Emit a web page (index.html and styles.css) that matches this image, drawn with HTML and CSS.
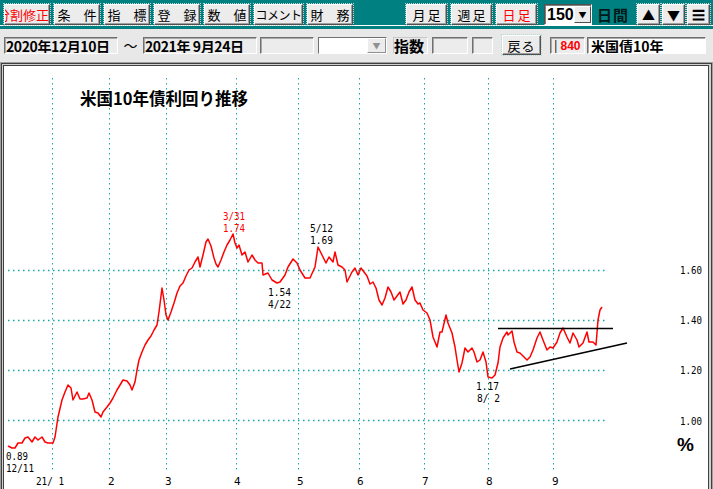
FILE: index.html
```html
<!DOCTYPE html>
<html lang="ja">
<head>
<meta charset="utf-8">
<title>米国10年債利回り推移</title>
<link rel="stylesheet" href="styles.css">
</head>
<body>
<div class="app">
  <div class="toolbar">
    <div class="btn w46 red clip ml4">分割修正</div>
    <div class="btn w46 ml4">条　件</div>
    <div class="btn w46 ml4">指　標</div>
    <div class="btn w46 ml4">登　録</div>
    <div class="btn w46 ml4">数　値</div>
    <div class="btn w49 ml4 tight">コメント</div>
    <div class="btn w46 ml4">財　務</div>
    <div class="btn w41 ml53 sp">月足</div>
    <div class="btn w41 ml4 sp">週足</div>
    <div class="btn w41 ml4 sp red">日足</div>
    <div class="select ml7">
      <span class="select-val">150</span>
      <span class="select-drop">▼</span>
    </div>
    <div class="tb-label">日間</div>
    <div class="btn w23 ml8 icon">▲</div>
    <div class="btn w23 ml2 icon">▼</div>
    <div class="btn w23 ml2 icon">☰</div>
  </div>
  <div class="toolbar-strip"></div>

  <div class="infobar">
    <div class="field date ml4">2020年12月10日</div>
    <div class="tilde">～</div>
    <div class="field date">2021年 9月24日</div>
    <div class="field w54 ml3"></div>
    <div class="combo ml4"><span class="combo-drop">▼</span></div>
    <div class="label-box ml6">指数</div>
    <div class="field w36 ml4"></div>
    <div class="field w21 ml4"></div>
    <div class="btn back ml9">戻る</div>
    <div class="field code ml9"><span class="bar">|</span><span class="num">840</span></div>
    <div class="field name ml2">米国債10年</div>
  </div>

  <div class="chart">
    <div class="chart-frame">
      <div class="chart-inner">
        <svg class="plot" width="704" height="423" viewBox="4 66 704 423" xmlns="http://www.w3.org/2000/svg">
          <g class="grid-v">
            <line x1="52.5" y1="78" x2="52.5" y2="471"/>
            <line x1="109.5" y1="78" x2="109.5" y2="471"/>
            <line x1="166.5" y1="78" x2="166.5" y2="471"/>
            <line x1="236.5" y1="78" x2="236.5" y2="471"/>
            <line x1="298.5" y1="78" x2="298.5" y2="471"/>
            <line x1="359.5" y1="78" x2="359.5" y2="471"/>
            <line x1="424.5" y1="78" x2="424.5" y2="471"/>
            <line x1="488.5" y1="78" x2="488.5" y2="471"/>
            <line x1="553.5" y1="78" x2="553.5" y2="471"/>
          </g>
          <g class="grid-h">
            <line x1="8" y1="270.5" x2="606" y2="270.5"/>
            <line x1="8" y1="320.5" x2="606" y2="320.5"/>
            <line x1="8" y1="370.5" x2="606" y2="370.5"/>
            <line x1="8" y1="420.5" x2="606" y2="420.5"/>
          </g>

          <text class="title" x="80" y="105">米国10年債利回り推移</text>

          <polyline class="series" points="8,446 12,448 15,448 18,443 22,443 25,438 28,437 32,442 35,437 38,440 42,437 45,442 48,443 53,443 55,437 58,417 62,400 65,392 68,385 71,388 73,400 77,392 80,399 83,399 87,398 89,393 92,400 95,412 98,413 101,417 103,412 107,407 110,403 113,398 117,390 120,385 123,380 127,381 130,385 132,390 135,382 137,370 139,360 142,352 145,345 148,340 151,336 154,330 157,325 159,312 162,288 164,300 166,315 168,320 171,312 174,303 177,293 180,286 183,283 186,276 189,270 192,268 195,262 198,257 200,267 203,255 206,242 208,239 211,246 214,258 216,264 218,267 221,260 224,252 227,245 230,240 233,234 235,243 237,248 239,245 242,255 245,252 248,262 252,255 255,260 258,263 262,263 263,275 268,273 272,280 277,283 280,282 285,275 288,267 293,259 297,263 300,270 305,278 310,278 315,267 318,247 322,255 326,263 329,257 333,262 335,252 338,265 342,267 345,270 347,282 349,278 352,272 355,268 358,275 361,268 364,272 367,276 370,284 373,282 376,288 379,300 382,305 385,298 388,287 391,292 394,300 397,296 400,292 403,304 406,300 409,292 412,287 415,300 418,304 420,303 423,310 427,313 430,320 433,337 437,347 440,332 442,332 446,315 448,323 452,333 455,347 457,360 459,372 462,363 465,348 468,352 472,348 474,352 477,362 480,360 483,352 486,362 488,377 492,378 495,375 498,363 500,347 503,338 507,332 508,335 512,331 514,342 517,352 520,353 524,357 527,360 530,357 533,350 537,338 540,332 543,340 547,350 550,347 553,348 557,342 560,333 563,328 567,337 570,343 573,333 577,340 579,347 583,343 587,332 589,342 593,342 596,345 598,320 600,310 602,307"/>

          <line class="trend" x1="498" y1="328.5" x2="613" y2="328.5"/>
          <line class="trend" x1="510" y1="369" x2="627" y2="343"/>

          <g class="num">
            <text class="hl" x="223" y="220" textLength="22" lengthAdjust="spacingAndGlyphs">3/31</text>
            <text class="hl" x="223" y="232" textLength="22" lengthAdjust="spacingAndGlyphs">1.74</text>
            <text x="310" y="232" textLength="23" lengthAdjust="spacingAndGlyphs">5/12</text>
            <text x="310" y="244" textLength="23" lengthAdjust="spacingAndGlyphs">1.69</text>
            <text x="268" y="296" textLength="23" lengthAdjust="spacingAndGlyphs">1.54</text>
            <text x="268" y="308" textLength="23" lengthAdjust="spacingAndGlyphs">4/22</text>
            <text x="476" y="390" textLength="23" lengthAdjust="spacingAndGlyphs">1.17</text>
            <text x="477" y="402" textLength="23" lengthAdjust="spacingAndGlyphs">8/ 2</text>
            <text x="6" y="460" textLength="22" lengthAdjust="spacingAndGlyphs">0.89</text>
            <text x="6" y="472" textLength="28" lengthAdjust="spacingAndGlyphs">12/11</text>

            <text x="680" y="274" textLength="22" lengthAdjust="spacingAndGlyphs">1.60</text>
            <text x="680" y="324" textLength="22" lengthAdjust="spacingAndGlyphs">1.40</text>
            <text x="680" y="374" textLength="22" lengthAdjust="spacingAndGlyphs">1.20</text>
            <text x="680" y="425" textLength="22" lengthAdjust="spacingAndGlyphs">1.00</text>

            <text x="36" y="485" textLength="28" lengthAdjust="spacingAndGlyphs">21/ 1</text>
            <text x="108" y="485">2</text>
            <text x="165" y="485">3</text>
            <text x="234" y="485">4</text>
            <text x="297" y="485">5</text>
            <text x="357" y="485">6</text>
            <text x="422" y="485">7</text>
            <text x="486" y="485">8</text>
            <text x="552" y="485">9</text>
          </g>
          <text class="pct" x="677" y="451">%</text>
        </svg>
      </div>
    </div>
  </div>
</div>
</body>
</html>
```

FILE: styles.css
```css
html, body {
  margin: 0;
  padding: 0;
}

body {
  width: 713px;
  height: 489px;
  overflow: hidden;
  background: #e6e6e6;
  font-family: "Noto Sans CJK JP", "Noto Sans", sans-serif;
  color: #000;
}

.app {
  width: 713px;
  height: 489px;
  display: flex;
  flex-direction: column;
}

/* ---------- top toolbar ---------- */
.toolbar {
  box-sizing: border-box;
  height: 26px;
  padding-top: 4px;
  background: #008080;
  border-bottom: 1px solid #ffffff;
  display: flex;
  align-items: flex-start;
}

.toolbar-strip {
  height: 3px;
  background: #008080;
}

.btn {
  box-sizing: border-box;
  height: 21px;
  background: #ececec;
  border: 1px solid;
  border-color: #ffffff #505050 #505050 #ffffff;
  box-shadow: inset -1px -1px 0 #a0a0a0;
  outline: 1px dotted #b8d8d8;
  display: flex;
  align-items: center;
  justify-content: center;
  font-size: 13px;
  line-height: 1;
  white-space: nowrap;
  overflow: hidden;
  flex: none;
}

.btn.red { color: #ff0000; }
.btn.clip { justify-content: flex-end; }
.btn.sp { letter-spacing: 2px; padding-left: 2px; }
.btn.tight { font-size: 12px; letter-spacing: -0.5px; }
.btn.icon { font-size: 13px; }

.w46 { width: 46px; }
.w49 { width: 49px; }
.w41 { width: 41px; }
.w23 { width: 23px; }
.w54 { width: 54px; }
.w36 { width: 36px; }
.w21 { width: 21px; }

.ml2 { margin-left: 2px; }
.ml3 { margin-left: 3px; }
.ml4 { margin-left: 4px; }
.ml6 { margin-left: 6px; }
.ml7 { margin-left: 7px; }
.ml8 { margin-left: 8px; }
.ml9 { margin-left: 9px; }
.ml53 { margin-left: 53px; }

.select {
  box-sizing: border-box;
  width: 48px;
  height: 21px;
  background: #ffffff;
  border: 1px solid;
  border-color: #505050 #ffffff #ffffff #505050;
  box-shadow: inset 1px 1px 0 #808080;
  display: flex;
  align-items: center;
  flex: none;
}

.select-val {
  font-family: "Liberation Sans", sans-serif;
  font-size: 16px;
  font-weight: bold;
  line-height: 1;
  padding-left: 2px;
  width: 27px;
  flex: none;
}

.select-drop {
  box-sizing: border-box;
  width: 17px;
  height: 17px;
  background: #ececec;
  border: 1px solid;
  border-color: #ffffff #505050 #505050 #ffffff;
  font-size: 8px;
  display: flex;
  align-items: center;
  justify-content: center;
  flex: none;
}

.tb-label {
  margin-left: 5px;
  font-size: 15px;
  font-weight: bold;
  line-height: 21px;
  letter-spacing: 1px;
  color: #001818;
  flex: none;
}

/* ---------- info bar ---------- */
.infobar {
  box-sizing: border-box;
  height: 33px;
  padding-top: 8px;
  background: #e8e8e8;
  display: flex;
  align-items: flex-start;
}

.field {
  box-sizing: border-box;
  height: 17px;
  border: 1px solid;
  border-color: #707070 #ffffff #ffffff #707070;
  box-shadow: inset 1px 1px 0 #a8a8a8;
  background: #ececec;
  display: flex;
  align-items: center;
  white-space: nowrap;
  overflow: hidden;
  flex: none;
  font-size: 14px;
  font-weight: bold;
  line-height: 1;
}

.field.date {
  width: 114px;
  padding-left: 1px;
  letter-spacing: -0.4px;
}

.tilde {
  width: 25px;
  text-align: center;
  font-size: 14px;
  line-height: 17px;
  flex: none;
}

.combo {
  box-sizing: border-box;
  width: 69px;
  height: 17px;
  background: #ffffff;
  border: 1px solid;
  border-color: #707070 #ffffff #ffffff #707070;
  display: flex;
  justify-content: flex-end;
  flex: none;
}

.combo-drop {
  box-sizing: border-box;
  width: 19px;
  height: 15px;
  background: #ececec;
  border: 1px solid;
  border-color: #ffffff #909090 #909090 #ffffff;
  color: #909090;
  font-size: 8px;
  display: flex;
  align-items: center;
  justify-content: center;
}

.label-box {
  box-sizing: border-box;
  width: 35px;
  height: 17px;
  border: 1px solid;
  border-color: #c8c8c8 #ffffff #ffffff #c8c8c8;
  font-size: 15px;
  font-weight: bold;
  line-height: 15px;
  flex: none;
}

.btn.back {
  width: 39px;
  height: 20px;
  margin-top: -2px;
  font-size: 13px;
  letter-spacing: 1px;
}

.field.code {
  width: 35px;
  padding-left: 3px;
  font-size: 13px;
}

.field.code .bar {
  font-weight: normal;
  margin-right: 3px;
}

.field.code .num {
  color: #ff0000;
  font-family: "Liberation Sans", sans-serif;
  font-size: 12px;
}

.field.name {
  width: 119px;
  background: #ffffff;
  padding-left: 3px;
  font-size: 14px;
}

/* ---------- chart ---------- */
.chart {
  box-sizing: border-box;
  height: 427px;
  background: #b8b8b8;
  border: 1px solid #a0a0a0;
  border-bottom: none;
}

.chart-frame {
  box-sizing: border-box;
  height: 100%;
  border: 1px solid #404040;
  border-bottom: none;
  padding: 1px 2px 0 1px;
  background: #d0d0d0;
}

.chart-inner {
  box-sizing: border-box;
  height: 100%;
  border: 1px solid #404040;
  border-bottom: none;
  background: #ffffff;
  overflow: hidden;
}

.plot {
  display: block;
}

.grid-v line {
  stroke: #10a8a8;
  stroke-width: 1;
  stroke-dasharray: 1.5 3.5;
}

.grid-h line {
  stroke: #10a8a8;
  stroke-width: 1.5;
  stroke-dasharray: 1.5 3.5;
}

.title {
  font-family: "Noto Sans CJK JP", sans-serif;
  font-size: 16.5px;
  font-weight: bold;
  fill: #000;
}

.series {
  fill: none;
  stroke: #ff0000;
  stroke-width: 1.5;
  stroke-linejoin: round;
}

.trend {
  stroke: #000;
  stroke-width: 1.5;
}

.num text {
  font-family: "DejaVu Sans Mono", monospace;
  font-size: 11px;
  fill: #000;
}

.num text.hl {
  fill: #ff0000;
}

.pct {
  font-family: "Liberation Sans", sans-serif;
  font-size: 19px;
  font-weight: bold;
  fill: #000;
}
```
